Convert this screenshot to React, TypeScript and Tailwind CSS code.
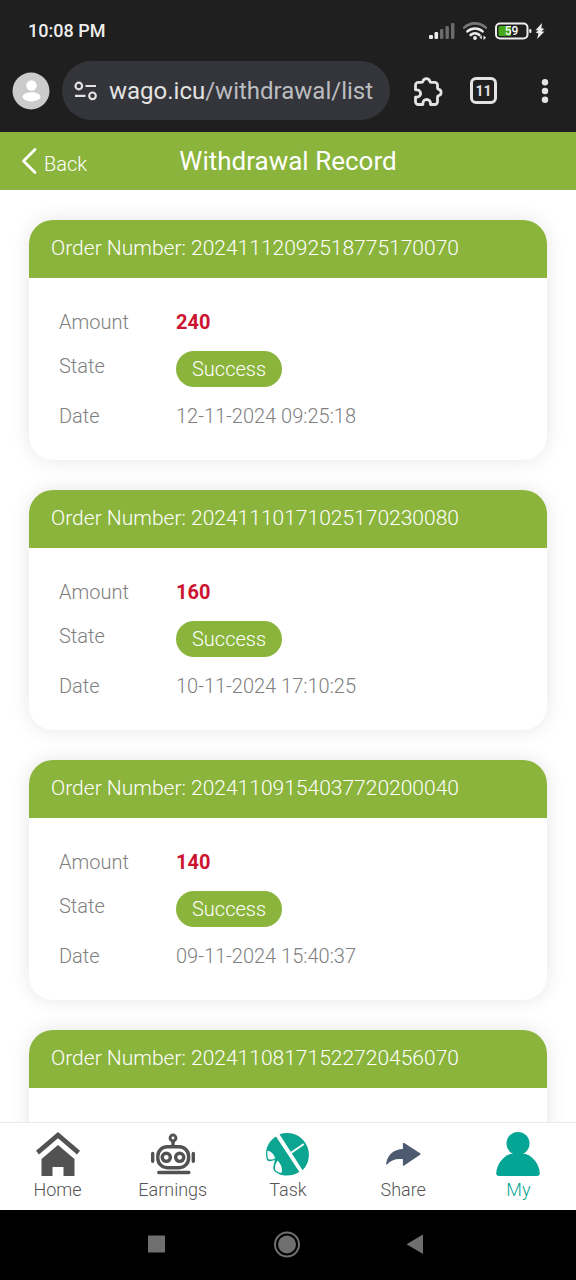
import type { ReactNode } from 'react'
import clsx from 'clsx'

interface WithdrawalRecord {
  orderNumber: string
  details?: {
    amount: number
    state: string
    date: string
  }
}

const records: WithdrawalRecord[] = [
  { orderNumber: '20241112092518775170070', details: { amount: 240, state: 'Success', date: '12-11-2024 09:25:18' } },
  { orderNumber: '20241110171025170230080', details: { amount: 160, state: 'Success', date: '10-11-2024 17:10:25' } },
  { orderNumber: '20241109154037720200040', details: { amount: 140, state: 'Success', date: '09-11-2024 15:40:37' } },
  { orderNumber: '20241108171522720456070' },
]

function SignalIcon() {
  return (
    <svg className="h-4 w-[26px]" viewBox="0 0 26 16" aria-hidden="true">
      <g fill="#ededed">
        <rect x="0" y="12" width="4" height="4" rx="1.2" />
        <rect x="5.5" y="9" width="3.6" height="7" rx="1.2" />
      </g>
      <g fill="#6b6b6b">
        <rect x="11" y="6" width="3.4" height="10" rx="1.2" />
        <rect x="16.5" y="3" width="3.4" height="13" rx="1.2" />
        <rect x="22" y="0" width="3.4" height="16" rx="1.2" />
      </g>
    </svg>
  )
}

function WifiIcon() {
  return (
    <svg className="h-[18px] w-6" viewBox="0 0 24 18" fill="none" aria-hidden="true">
      <path d="M1.2 5.6C7.5-.1 16.5-.1 22.8 5.6" stroke="#777" strokeWidth="2.6" strokeLinecap="round" />
      <path d="M4.4 9.4c4.4-3.9 10.8-3.9 15.2 0" stroke="#ededed" strokeWidth="2.6" strokeLinecap="round" />
      <path d="M7.6 13c2.6-2.3 6.2-2.3 8.8 0" stroke="#ededed" strokeWidth="2.6" strokeLinecap="round" />
      <circle cx="12" cy="16" r="1.9" fill="#ededed" />
      <path d="M18.7 13v4.6l-2.2-2.4zM20.5 18v-4.6l2.6 2.4z" fill="#ededed" />
    </svg>
  )
}

function BatteryIcon() {
  return (
    <svg className="h-[18px] w-[37px]" viewBox="0 0 37 18" role="img" aria-label="Battery 59%">
      <rect x="1" y="1.5" width="31.5" height="15" rx="4" fill="none" stroke="#ededed" strokeWidth="2" />
      <path d="M5 4h11v10H5a1.5 1.5 0 0 1-1.5-1.5v-7A1.5 1.5 0 0 1 5 4z" fill="#48a81c" />
      <rect x="34.2" y="7" width="2.2" height="4" rx="1" fill="#ededed" />
      <text x="16.5" y="13" textAnchor="middle" fontFamily="Roboto, sans-serif" fontSize="12" fontWeight="500" fill="#fff">59</text>
    </svg>
  )
}

function BoltIcon() {
  return (
    <svg className="h-4 w-[10px]" viewBox="0 0 10 16" fill="#ededed" aria-hidden="true">
      <path d="M7 0 .5 7.2h3L.8 9.6l2.7.8L2 16l7.5-7.6H6.3l3-2.6-2.9-.6z" />
    </svg>
  )
}

function StatusBar() {
  return (
    <div className="flex h-[61px] items-center justify-between pl-7 pr-[31px]">
      <span className="text-lg font-medium text-[#ededed]">10:08 PM</span>
      <div className="flex items-center gap-2">
        <SignalIcon />
        <WifiIcon />
        <div className="flex items-center gap-[3px]">
          <BatteryIcon />
          <BoltIcon />
        </div>
      </div>
    </div>
  )
}

function BrowserBar() {
  return (
    <div className="flex items-center pb-3 pl-3 pr-[19px] text-[#e3e3e3]">
      <button type="button" aria-label="Profile" className="shrink-0">
        <svg className="size-[38px]" viewBox="0 0 38 38">
          <circle cx="19" cy="19" r="18.5" fill="#cbcbcb" />
          <circle cx="19.5" cy="13.5" r="5.2" fill="#fff" />
          <ellipse cx="19.5" cy="24.8" rx="9" ry="4.6" fill="#fff" />
        </svg>
      </button>
      <button type="button" aria-label="Edit address" className="ml-3 flex h-[59px] min-w-0 flex-1 items-center rounded-full bg-[#34353a] pl-3">
        <svg className="h-5 w-6 shrink-0" viewBox="0 0 24 20" fill="none" stroke="currentColor" strokeWidth="2.2" aria-hidden="true">
          <circle cx="4.8" cy="5" r="3.3" />
          <path d="M11.5 5H22M1 14.8h10.5" />
          <circle cx="18.5" cy="14.8" r="3.3" />
        </svg>
        <span className="ml-[11px] truncate text-2xl text-[#bcbdc0]">
          <span className="text-[#e3e3e3]">wago.icu</span>/withdrawal/list
        </span>
      </button>
      <button type="button" aria-label="Extensions" className="ml-[23px] shrink-0">
        <svg className="size-[30px]" viewBox="0 0 30 30" fill="none" stroke="currentColor" strokeWidth="2.8" strokeLinejoin="round">
          <path d="M2.5 9.2a2.8 2.8 0 0 1 2.8-2.8H8.6Q9.9 6.4 10 5.2a3.5 3.5 0 0 1 6.800 0Q17 6.400 18.200 6.400H21.700a2.800 2.800 0 0 1 2.800 2.800v2.700q0 1.200 1.200 1.500a3.200 3.200 0 0 1 0 6.200q-1.200.3-1.200 1.500v4.600a2.800 2.800 0 0 1-2.800 2.800h-4.200v-1.200a3.800 3.800 0 0 0-7.600 0v1.200H5.300a2.800 2.800 0 0 1-2.800-2.800v-4.500h1.400a3.700 3.700 0 0 0 0-7.400H2.500z" />
        </svg>
      </button>
      <button type="button" aria-label="Tabs" className="ml-[27px] flex size-[27px] shrink-0 items-center justify-center rounded-md border-[3px] border-current text-sm font-bold">
        11
      </button>
      <button type="button" aria-label="More" className="ml-9 shrink-0">
        <svg className="size-6" viewBox="0 0 24 24" fill="currentColor">
          <circle cx="12" cy="3.2" r="3.2" />
          <circle cx="12" cy="12" r="3.2" />
          <circle cx="12" cy="20.8" r="3.2" />
        </svg>
      </button>
    </div>
  )
}

function PageHeader() {
  return (
    <header className="grid h-[58px] shrink-0 grid-cols-[1fr_auto_1fr] items-center bg-[#8ab43b] text-white">
      <a href="#back" className="flex items-center pl-[21px] text-xl font-light">
        <svg className="h-7 w-4" viewBox="0 0 16 28" fill="none" stroke="currentColor" strokeWidth="2.8" strokeLinecap="round" strokeLinejoin="round" aria-hidden="true">
          <path d="M14 2.5 2.5 14 14 25.5" />
        </svg>
        <span className="ml-[7px] pt-1.5">Back</span>
      </a>
      <h1 className="text-[26px]">Withdrawal Record</h1>
    </header>
  )
}

function RecordCard({ orderNumber, details }: WithdrawalRecord) {
  return (
    <article className="min-h-60 shrink-0 overflow-hidden rounded-3xl bg-white shadow-[0_0_20px_rgba(0,0,0,0.1)]">
      <h2 className="flex h-[58px] items-center bg-[#8ab43b] px-[22px] text-[21px] font-light text-white">
        Order Number: {orderNumber}
      </h2>
      {details && (
        <dl className="grid grid-cols-[117px_1fr] gap-y-[14px] px-[30px] py-[29px] text-xl leading-[30px] font-light text-[#808080]">
          <dt>Amount</dt>
          <dd className="font-bold text-[#cc1330]">{details.amount}</dd>
          <dt>State</dt>
          <dd className="flex">
            <span className="flex h-9 items-center rounded-full bg-[#8ab43b] px-4 text-white">{details.state}</span>
          </dd>
          <dt>Date</dt>
          <dd>{details.date}</dd>
        </dl>
      )}
    </article>
  )
}

function HomeIcon() {
  return (
    <svg className="size-11" viewBox="0 0 44 44" fill="#525252" aria-hidden="true">
      <path d="M22 0 44 18.8l-3 3.7L22 6.2 3 22.5l-3-3.7z" />
      <path d="M22 13 38.5 27v17H27.5v-9h-11v9H5.5V27z" />
    </svg>
  )
}

function RobotIcon() {
  return (
    <svg className="size-11" viewBox="0 0 44 44" fill="none" stroke="#525252" strokeWidth="3.4" aria-hidden="true">
      <circle cx="22" cy="6" r="2.9" strokeWidth="3" />
      <path d="M22 9v6" />
      <rect x="6.8" y="14.7" width="30.8" height="21" rx="9.5" />
      <circle cx="15.3" cy="25.3" r="4.1" />
      <circle cx="28.7" cy="25.3" r="4.1" />
      <path d="M1.7 21.5v7.7M42.3 21.5v7.7" strokeLinecap="round" />
      <path d="M7.8 40.5h30" strokeLinecap="round" />
    </svg>
  )
}

function TaskIcon() {
  return (
    <svg className="size-11" viewBox="0 0 44 44" aria-hidden="true">
      <path d="M13.5 2.2A22 22 0 0 1 36.6 38.3z" fill="#0ba592" />
      <path d="M10 4.5C5 7.5 1 13 .3 18.500c-.5 4-.2 7.500 1.200 10.300 2.200.9 5 .4 7-1 .3 2.700-.9 4.700-1.300 7.700-.2 3 3.300 6 8.800 7.500 6 1.200 12 .3 17.400-3z" fill="#0ba592" />
      <path d="M1.500 18.800c3 .2 6 2.500 7.700 7.500-2.200 1.400-5.300 1.800-7 .6-.9-2.200-1.100-5.600-.7-8.100zM11.600 28.500c3.400 3.300 4.900 7.500 4.200 12-2.200.8-5.600-.7-6.700-3-.6-2.800.5-6.300 2.500-9z" fill="#fff" />
      <path d="m24 21.500 13.200-9" stroke="#fff" strokeWidth="2" strokeLinecap="round" />
    </svg>
  )
}

function ShareIcon() {
  return (
    <svg className="size-11" viewBox="0 0 44 44" fill="#4d5a70" aria-hidden="true">
      <path d="M23.2 10.9 39.1 21.2q1.2.8 0 1.6L23.2 33.6q-1.3.7-1.3-.7v-5.8C14.5 26.3 9.7 28.3 6.3 32.3q-1.400 1.200-1.100-.8C6.500 22.500 13 17.300 21.900 17v-5.400q0-1.400 1.300-.7z" />
    </svg>
  )
}

function UserIcon() {
  return (
    <svg className="size-11" viewBox="0 0 44 44" fill="#05a596" aria-hidden="true">
      <circle cx="22" cy="11.5" r="11.5" />
      <path d="M14 22h16c7.5 3 13 10 13.8 19 .1 2-.9 3-2.8 3H3C1.1 44 .1 43 .2 41 1 32 6.5 25 14 22z" />
    </svg>
  )
}

const tabs: { label: string; icon: ReactNode; active?: boolean }[] = [
  { label: 'Home', icon: <HomeIcon /> },
  { label: 'Earnings', icon: <RobotIcon /> },
  { label: 'Task', icon: <TaskIcon /> },
  { label: 'Share', icon: <ShareIcon /> },
  { label: 'My', icon: <UserIcon />, active: true },
]

function TabBar() {
  return (
    <nav className="grid h-[88px] shrink-0 grid-cols-5 border-t border-[#e9e9e9] bg-white">
      {tabs.map(tab => (
        <a
          key={tab.label}
          href={`#${tab.label.toLowerCase()}`}
          className={clsx('flex flex-col items-center pt-[9px] text-lg leading-7 font-light', tab.active ? 'text-[#05a596]' : 'text-[#555]')}
        >
          {tab.icon}
          {tab.label}
        </a>
      ))}
    </nav>
  )
}

function SystemNav() {
  return (
    <div className="flex h-[70px] shrink-0 items-center justify-center gap-[102px] bg-black">
      <button type="button" aria-label="Recent apps">
        <svg className="size-7" viewBox="0 0 28 28"><path d="M4 4.5h17v17H4z" fill="#6f6f6f" /></svg>
      </button>
      <button type="button" aria-label="Home screen">
        <svg className="size-7" viewBox="0 0 28 28">
          <circle cx="13" cy="13.5" r="12" fill="none" stroke="#6f6f6f" strokeWidth="2" />
          <circle cx="13" cy="13.5" r="9" fill="#6f6f6f" />
        </svg>
      </button>
      <button type="button" aria-label="Go back">
        <svg className="size-7" viewBox="0 0 28 28"><path d="M19 3.5v19.5L2.5 13.3z" fill="#6f6f6f" /></svg>
      </button>
    </div>
  )
}

export default function App() {
  return (
    <div className="flex h-screen flex-col bg-white font-['Roboto',sans-serif]">
      <div className="shrink-0 bg-[#1f1f1f]">
        <StatusBar />
        <BrowserBar />
      </div>
      <PageHeader />
      <main className="flex min-h-0 flex-1 flex-col gap-[30px] overflow-hidden px-[29px] pt-[30px]">
        {records.map(record => (
          <RecordCard key={record.orderNumber} {...record} />
        ))}
      </main>
      <TabBar />
      <SystemNav />
    </div>
  )
}
